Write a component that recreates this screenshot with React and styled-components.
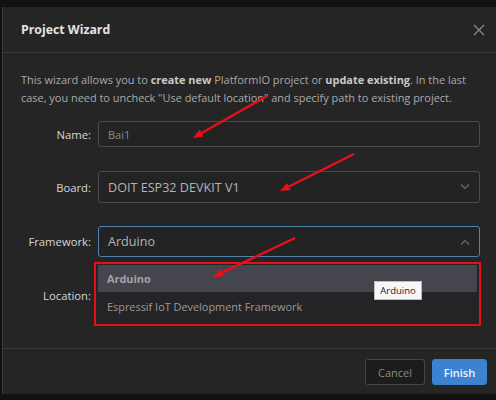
import React from "react";
import styled, { createGlobalStyle } from "styled-components";

const Global = createGlobalStyle`
  html, body { margin: 0; padding: 0; background: #141414; }
  body { font-family: "Open Sans", "Noto Sans", sans-serif; overflow: hidden; }
  * { box-sizing: border-box; }
`;

const Page = styled.div`
  width: 496px;
  height: 400px;
  padding-top: 7px;
  background: #121212;
  position: relative;
  overflow: hidden;
`;

const Dialog = styled.div`
  margin-left: 2px;
  height: 387px;
  background: #252526;
  border-left: 1px solid #3a3a3a;
  display: flex;
  flex-direction: column;
`;

const Header = styled.div`
  height: 46px;
  padding: 0 8px 0 18px;
  display: flex;
  align-items: center;
  justify-content: space-between;
  border-bottom: 1px solid #383838;
`;

const Title = styled.div`
  color: #e2e2e2;
  font-weight: 700;
  font-size: 12.3px;
`;

const Close = styled.div`
  width: 18px;
  height: 18px;
  display: flex;
  align-items: center;
  justify-content: center;
`;

const Body = styled.div`
  flex: 1;
  padding: 18px 15px 0 18px;
  position: relative;
`;

const Desc = styled.p`
  margin: 0 0 14px;
  font-size: 10.95px;
  line-height: 18px;
  color: #a9a9a9;
  white-space: nowrap;
  b { color: #c8c8c8; font-weight: 700; }
`;

const Row = styled.div`
  display: grid;
  grid-template-columns: 70px 382px;
  column-gap: 7px;
  align-items: center;
  margin-bottom: ${(p) => p.$mb}px;
`;

const Label = styled.div`
  text-align: right;
  font-size: 11.3px;
  color: #d6d6d6;
  white-space: nowrap;
`;

const Field = styled.div`
  height: ${(p) => p.$h}px;
  border: 1px solid ${(p) => (p.$focus ? "#4f82ad" : "#4a4a4a")};
  border-radius: 3px;
  background: #232324;
  display: flex;
  align-items: center;
  justify-content: space-between;
  padding: 0 9px 0 9px;
  color: ${(p) => p.$color};
  font-size: ${(p) => p.$fs}px;
`;

const Menu = styled.div`
  position: absolute;
  left: 73px;
  top: 0;
  width: 387px;
  height: 64px;
  border: 2px solid #e3101a;
  background: #242426;
  padding: 1px 2px;
`;

const Item = styled.div`
  height: ${(p) => p.$h}px;
  display: flex;
  align-items: center;
  padding-left: 9px;
  font-size: 10.9px;
  background: ${(p) => (p.$active ? "#45454d" : "transparent")};
  color: ${(p) => (p.$active ? "#a3a3a8" : "#9a9a9a")};
  font-weight: ${(p) => (p.$active ? 700 : 400)};
`;

const Tip = styled.div`
  position: absolute;
  left: 278px;
  top: 17px;
  width: 48px;
  height: 19px;
  background: #f7f7f7;
  border: 1px solid #bbb;
  color: #222;
  font-size: 9.5px;
  display: flex;
  align-items: center;
  justify-content: center;
`;

const LocRow = styled.div`
  position: relative;
  height: 66px;
`;

const LocLabel = styled(Label)`
  position: absolute;
  left: 0;
  width: 70px;
  top: 26px;
`;

const Footer = styled.div`
  height: 46px;
  border-top: 1px solid #3a3a3a;
  display: flex;
  justify-content: flex-end;
  align-items: center;
  gap: 7px;
  padding-right: 9px;
  padding-top: 1px;
`;

const Button = styled.div`
  height: 26px;
  width: ${(p) => (p.$primary ? 55 : 60)}px;
  border-radius: 3px;
  display: flex;
  align-items: center;
  justify-content: center;
  font-size: 11px;
  background: ${(p) => (p.$primary ? "#3b82d0" : "#1c1c1c")};
  border: 1px solid ${(p) => (p.$primary ? "#3b82d0" : "#454545")};
  color: ${(p) => (p.$primary ? "#f2f6fb" : "#8a8a8a")};
  font-weight: ${(p) => (p.$primary ? 600 : 400)};
`;

const Overlay = styled.svg`
  position: absolute;
  left: 0;
  top: 0;
  pointer-events: none;
`;

const Chevron = ({ up }) => (
  <svg width="10" height="6" viewBox="0 0 10 6">
    <path
      d={up ? "M1 5.5 L5 1.5 L9 5.5" : "M1 0.5 L5 4.5 L9 0.5"}
      fill="none"
      stroke="#6a6a6a"
      strokeWidth="1.2"
    />
  </svg>
);

const Arrow = ({ x1, y1, x2, y2 }) => {
  const ang = Math.atan2(y2 - y1, x2 - x1);
  const L = 10, W = 4;
  const bx = x2 - L * Math.cos(ang), by = y2 - L * Math.sin(ang);
  const px = -Math.sin(ang) * W, py = Math.cos(ang) * W;
  return (
    <g>
      <line x1={x1} y1={y1} x2={bx} y2={by} stroke="#e8101a" strokeWidth="2.4" />
      <polygon
        points={`${x2},${y2} ${bx + px},${by + py} ${bx - px},${by - py}`}
        fill="#e8101a"
      />
    </g>
  );
};

export default function App() {
  return (
    <Page>
      <Global />
      <Dialog>
        <Header>
          <Title>Project Wizard</Title>
          <Close>
            <svg width="12" height="12" viewBox="0 0 12 12">
              <path d="M1 1 L11 11 M11 1 L1 11" stroke="#8a8a8a" strokeWidth="1.3" />
            </svg>
          </Close>
        </Header>
        <Body>
          <Desc>
            This wizard allows you to <b>create new</b> PlatformIO project or{" "}
            <b>update existing</b>. In the last
            <br />
            case, you need to uncheck "Use default location" and specify path to
            existing project.
          </Desc>
          <Row $mb={24}>
            <Label>Name:</Label>
            <Field $h={26} $color="#8c8c8c" $fs={11}>Bai1</Field>
          </Row>
          <Row $mb={23}>
            <Label>Board:</Label>
            <Field $h={32} $color="#b4b4b4" $fs={12.6}>
              DOIT ESP32 DEVKIT V1
              <Chevron />
            </Field>
          </Row>
          <Row $mb={5}>
            <Label>Framework:</Label>
            <Field $h={31} $focus $color="#b4b4b4" $fs={12.6}>
              Arduino
              <Chevron up />
            </Field>
          </Row>
          <LocRow>
            <LocLabel>Location:</LocLabel>
            <Menu>
              <Item $active $h={27}>Arduino</Item>
              <Item $h={28}>Espressif IoT Development Framework</Item>
              <Tip>Arduino</Tip>
            </Menu>
          </LocRow>
        </Body>
        <Footer>
          <Button>Cancel</Button>
          <Button $primary>Finish</Button>
        </Footer>
      </Dialog>
      <Overlay width="496" height="400">
        <Arrow x1={267} y1={96} x2={193} y2={138} />
        <Arrow x1={354} y1={154} x2={280} y2={191} />
        <Arrow x1={295} y1={238} x2={213} y2={277} />
      </Overlay>
    </Page>
  );
}
